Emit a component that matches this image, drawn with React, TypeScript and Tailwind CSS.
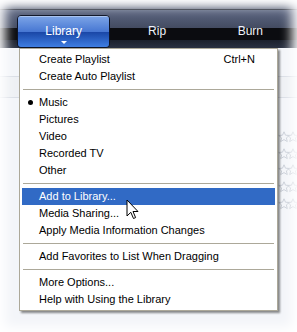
import { ReactNode } from 'react'

type Entry =
  | { kind: 'item'; label: string; shortcut?: string; checked?: boolean; active?: boolean }
  | { kind: 'sep' }

const entries: Entry[] = [
  { kind: 'item', label: 'Create Playlist', shortcut: 'Ctrl+N' },
  { kind: 'item', label: 'Create Auto Playlist' },
  { kind: 'sep' },
  { kind: 'item', label: 'Music', checked: true },
  { kind: 'item', label: 'Pictures' },
  { kind: 'item', label: 'Video' },
  { kind: 'item', label: 'Recorded TV' },
  { kind: 'item', label: 'Other' },
  { kind: 'sep' },
  { kind: 'item', label: 'Add to Library...', active: true },
  { kind: 'item', label: 'Media Sharing...' },
  { kind: 'item', label: 'Apply Media Information Changes' },
  { kind: 'sep' },
  { kind: 'item', label: 'Add Favorites to List When Dragging' },
  { kind: 'sep' },
  { kind: 'item', label: 'More Options...' },
  { kind: 'item', label: 'Help with Using the Library' },
]

function Star({ className }: { className?: string }) {
  return (
    <svg width="12" height="12" viewBox="0 0 12 12" className={className}>
      <path
        d="M6 0.8 L7.5 4.2 L11.2 4.5 L8.4 6.9 L9.3 10.6 L6 8.6 L2.7 10.6 L3.6 6.9 L0.8 4.5 L4.5 4.2 Z"
        fill="none"
        stroke="#c3c8d2"
        strokeWidth="0.9"
      />
    </svg>
  )
}

function Tab({ children, selected }: { children: ReactNode; selected?: boolean }) {
  if (selected) {
    return (
      <div className="relative w-[99px] h-[33px] rounded-[4px] border border-[#0d1326] overflow-hidden flex flex-col">
        <div className="h-[16px] bg-gradient-to-b from-[#7aa2e6] to-[#4676d2] border-t border-[#a9c4f0]" />
        <div className="flex-1 bg-gradient-to-b from-[#1a46a6] to-[#3f7ee2]" />
        <div className="absolute inset-0 flex items-center justify-center pb-[2px] text-white text-[12px]">
          {children}
        </div>
        <div className="absolute left-1/2 -translate-x-1/2 bottom-[3px] w-0 h-0 border-l-[3px] border-r-[3px] border-t-[3px] border-l-transparent border-r-transparent border-t-white" />
      </div>
    )
  }
  return (
    <div className="w-[99px] h-[33px] flex items-center justify-center pb-[2px] text-[#eef2fa] text-[12px]">
      {children}
    </div>
  )
}

function MenuRow({ entry }: { entry: Entry }) {
  if (entry.kind === 'sep') {
    return (
      <div className="h-[9px] flex items-center px-[3px]">
        <div className="h-px w-full bg-[#aca899]" />
      </div>
    )
  }
  return (
    <div
      className={
        'relative h-[17px] flex items-center mx-[2px] pl-[17px] pr-[20px] ' +
        (entry.active ? 'bg-[#316ac5] text-white' : 'text-black')
      }
    >
      {entry.checked && (
        <div className="absolute left-[6px] top-[6px] w-[5px] h-[5px] rounded-full bg-black" />
      )}
      <span className="flex-1 whitespace-nowrap">{entry.label}</span>
      {entry.shortcut && <span>{entry.shortcut}</span>}
    </div>
  )
}

export default function App() {
  return (
    <div
      className="relative w-[297px] h-[332px] overflow-hidden bg-[#f3f5f9]"
      style={{ fontFamily: '"Liberation Sans", Arial, sans-serif' }}
    >
      {/* player top bar */}
      <div className="relative h-[48px] flex flex-col">
        <div className="h-[9px] bg-gradient-to-b from-[#d4d7dd] to-[#6e7588]" />
        <div className="h-px bg-[#262b38]" />
        <div className="h-[18px] bg-gradient-to-b from-[#5d6782] to-[#434b61]" />
        <div className="h-[12px] bg-[#0b0c10]" />
        <div className="flex-1 bg-gradient-to-b from-[#1b202c] to-[#2a3142]" />
        <div className="absolute left-0 right-0 top-[15px] flex pl-[17px]">
          <Tab selected>Library</Tab>
          <Tab>Rip</Tab>
          <Tab>Burn</Tab>
        </div>
      </div>

      {/* library content under the menu */}
      <div className="flex flex-col">
        <div className="h-[28px]" />
        <div className="h-[22px] border-y border-[#d9dde5] bg-[#eef0f4]" />
        <div className="h-[33px]" />
        {[0, 1, 2, 3, 4].map((i) => (
          <div key={i} className="h-[16.7px] flex justify-end items-start pr-0">
            <Star />
            <Star className="-ml-[3px] -mr-[2px]" />
          </div>
        ))}
      </div>

      {/* dropdown menu */}
      <div className="absolute left-[19px] top-[48px] w-[259px] bg-white border border-[#aca899] pt-[2px] pb-[2px] text-[11px] shadow-[2px_2px_2px_rgba(0,0,0,0.45)]">
        {entries.map((e, i) => (
          <MenuRow key={i} entry={e} />
        ))}
      </div>

      {/* mouse pointer */}
      <svg
        className="absolute left-[126px] top-[199px]"
        width="13"
        height="21"
        viewBox="0 0 13 21"
      >
        <path
          d="M1 1 L1 17 L4.8 13.3 L7.5 19.5 L9.6 18.6 L7 12.5 L12 12.5 Z"
          fill="#fff"
          stroke="#000"
          strokeWidth="1"
          strokeLinejoin="miter"
        />
      </svg>

      {/* soft feathered edge of the screenshot */}
      <div className="absolute inset-0 pointer-events-none shadow-[inset_0_0_12px_5px_#ffffff]" />
    </div>
  )
}
